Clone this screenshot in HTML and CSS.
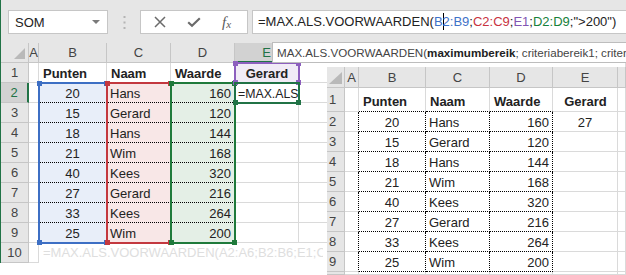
FILE: index.html
```html
<!DOCTYPE html>
<html lang="nl">
<head>
  <meta charset="UTF-8">
  <title>MAX.ALS.VOORWAARDEN</title>
  <link rel="stylesheet" href="styles.css">
</head>
<body>
<div class="page">

  <div class="excel">
    <div class="formula-bar">
      <div class="name-box">SOM<span class="caret"></span></div>
      <div class="grip">
        <svg width="3" height="13" viewBox="0 0 3 13"><rect x="0.5" y="0" width="2" height="2" fill="#b4b4b4"/><rect x="0.5" y="5.5" width="2" height="2" fill="#b4b4b4"/><rect x="0.5" y="11" width="2" height="2" fill="#b4b4b4"/></svg>
      </div>
      <div class="fx-box">
        <svg width="12" height="12" viewBox="0 0 12 12"><path d="M1 1L11 11M11 1L1 11" stroke="#6b6b6b" stroke-width="1.5" fill="none"/></svg>
        <svg width="14" height="12" viewBox="0 0 14 12"><path d="M1.2 6.2L5 9.8L12.8 2.2" stroke="#6b6b6b" stroke-width="2.2" fill="none"/></svg>
        <span class="fx">f<span>x</span></span>
      </div>
      <div class="formula">=MAX.ALS.VOORWAARDEN(<span class="f-blue">B<span class="cursor"></span>2:B9</span>;<span class="f-red">C2:C9</span>;<span class="f-purple">E1</span>;<span class="f-green">D2:D9</span>;"&gt;200")</div>
    </div>

    <div class="sheet-wrap">
      <div class="sheet grid-left">
        <div class="ch corner"></div><div class="ch">A</div><div class="ch">B</div><div class="ch">C</div><div class="ch">D</div><div class="ch sel">E</div><div class="ch"></div>

        <div class="rh">1</div><div class="c"></div><div class="c b">Punten</div><div class="c b">Naam</div><div class="c b">Waarde</div><div class="c b mid fill-purple">Gerard</div><div class="c"></div>
        <div class="rh sel">2</div><div class="c"></div><div class="c mid fill-blue ant">20</div><div class="c fill-red ant">Hans</div><div class="c num fill-green ant">160</div><div class="c edit">=MAX.ALS<span class="cursor"></span></div><div class="c"></div>
        <div class="rh">3</div><div class="c"></div><div class="c mid fill-blue ant">15</div><div class="c fill-red ant">Gerard</div><div class="c num fill-green ant">120</div><div class="c"></div><div class="c"></div>
        <div class="rh">4</div><div class="c"></div><div class="c mid fill-blue ant">18</div><div class="c fill-red ant">Hans</div><div class="c num fill-green ant">144</div><div class="c"></div><div class="c"></div>
        <div class="rh">5</div><div class="c"></div><div class="c mid fill-blue ant">21</div><div class="c fill-red ant">Wim</div><div class="c num fill-green ant">168</div><div class="c"></div><div class="c"></div>
        <div class="rh">6</div><div class="c"></div><div class="c mid fill-blue ant">40</div><div class="c fill-red ant">Kees</div><div class="c num fill-green ant">320</div><div class="c"></div><div class="c"></div>
        <div class="rh">7</div><div class="c"></div><div class="c mid fill-blue ant">27</div><div class="c fill-red ant">Gerard</div><div class="c num fill-green ant">216</div><div class="c"></div><div class="c"></div>
        <div class="rh">8</div><div class="c"></div><div class="c mid fill-blue ant">33</div><div class="c fill-red ant">Kees</div><div class="c num fill-green ant">264</div><div class="c"></div><div class="c"></div>
        <div class="rh">9</div><div class="c"></div><div class="c mid fill-blue">25</div><div class="c fill-red">Wim</div><div class="c num fill-green">200</div><div class="c"></div><div class="c"></div>
        <div class="rh">10</div><div class="c"></div><div class="ghost"><span>=MAX.ALS.VOORWAARDEN(A2:A6;B2:B6;E1;C</span></div>
      </div>

      <!-- kaders van de verwijzingen -->
      <div class="marks grid-left">
        <div class="range r-blue"><i class="h tl"></i><i class="h tr"></i><i class="h bl"></i><i class="h br"></i></div>
        <div class="range r-red"><i class="h tl"></i><i class="h tr"></i><i class="h bl"></i><i class="h br"></i></div>
        <div class="range r-green"><i class="h tl"></i><i class="h tr"></i><i class="h bl"></i><i class="h br"></i></div>
        <div class="range r-purple"><i class="h tl"></i><i class="h tr"></i><i class="h bl"></i><i class="h br"></i></div>
        <div class="range r-active"><i class="h bl"></i><i class="h br"></i></div>
      </div>
    </div>
  </div>

  <div class="tooltip">MAX.ALS.VOORWAARDEN(<b>maximumbereik</b>; criteriabereik1; criter</div>

  <div class="paste">
    <div class="ch corner"></div><div class="ch">A</div><div class="ch">B</div><div class="ch">C</div><div class="ch">D</div><div class="ch">E</div><div class="ch"></div>

    <div class="rh">1</div><div class="c"></div><div class="c b ant-b">Punten</div><div class="c b ant-b">Naam</div><div class="c b ant-b">Waarde</div><div class="c b mid">Gerard</div><div class="c"></div>
    <div class="rh">2</div><div class="c ant-a"></div><div class="c mid ant">20</div><div class="c ant">Hans</div><div class="c num ant">160</div><div class="c mid">27</div><div class="c"></div>
    <div class="rh">3</div><div class="c ant-a"></div><div class="c mid ant">15</div><div class="c ant">Gerard</div><div class="c num ant">120</div><div class="c"></div><div class="c"></div>
    <div class="rh">4</div><div class="c ant-a"></div><div class="c mid ant">18</div><div class="c ant">Hans</div><div class="c num ant">144</div><div class="c"></div><div class="c"></div>
    <div class="rh">5</div><div class="c ant-a"></div><div class="c mid ant">21</div><div class="c ant">Wim</div><div class="c num ant">168</div><div class="c"></div><div class="c"></div>
    <div class="rh">6</div><div class="c ant-a"></div><div class="c mid ant">40</div><div class="c ant">Kees</div><div class="c num ant">320</div><div class="c"></div><div class="c"></div>
    <div class="rh">7</div><div class="c ant-a"></div><div class="c mid ant">27</div><div class="c ant">Gerard</div><div class="c num ant">216</div><div class="c"></div><div class="c"></div>
    <div class="rh">8</div><div class="c ant-a"></div><div class="c mid ant">33</div><div class="c ant">Kees</div><div class="c num ant">264</div><div class="c"></div><div class="c"></div>
    <div class="rh">9</div><div class="c ant-a"></div><div class="c mid ant">25</div><div class="c ant">Wim</div><div class="c num ant">200</div><div class="c"></div><div class="c"></div>
    <div class="rh"></div><div class="c"></div><div class="c"></div><div class="c"></div><div class="c"></div><div class="c"></div><div class="c"></div>
  </div>

</div>
</body>
</html>
```

FILE: styles.css
```css
* {
  box-sizing: border-box;
}

body {
  margin: 0;
  font-family: 'Liberation Sans', Arial, sans-serif;
  font-size: 13px;
  color: #222;
  background: #fff;
}

.page {
  position: relative;
  width: 626px;
  height: 275px;
  overflow: hidden;
}

.excel {
  border-left: 1px solid #217346;
  height: 263px;
}

/* formulebalk */
.formula-bar {
  height: 43px;
  background: #e6e6e6;
  display: flex;
  align-items: flex-start;
  padding: 10px 0 0 7px;
}

.name-box {
  width: 100px;
  height: 24px;
  background: #fff;
  border: 1px solid #c6c6c6;
  display: flex;
  align-items: center;
  padding-left: 6px;
  color: #222;
}

.caret {
  margin-left: auto;
  margin-right: 7px;
  border-left: 4px solid transparent;
  border-right: 4px solid transparent;
  border-top: 4px solid #7a7a7a;
}

.grip {
  width: 32px;
  height: 24px;
  display: flex;
  align-items: center;
  justify-content: center;
}

.fx-box {
  width: 108px;
  height: 24px;
  background: #fff;
  border: 1px solid #c6c6c6;
  display: flex;
  align-items: center;
  gap: 21px;
  padding-left: 13px;
}

.fx {
  font-family: 'Liberation Serif', serif;
  font-style: italic;
  font-size: 15px;
  color: #5a5a5a;
  line-height: 1;
}

.fx span {
  font-size: 11px;
  position: relative;
  top: 1px;
}

.formula {
  flex: 1;
  margin-left: 4px;
  margin-right: -30px;
  height: 24px;
  background: #fff;
  border: 1px solid #c6c6c6;
  border-right: none;
  padding-left: 5px;
  line-height: 22px;
  white-space: nowrap;
  color: #222;
}

.f-blue { color: #3f72c8; }
.f-red { color: #c8323e; }
.f-purple { color: #8154b3; }
.f-green { color: #16813a; }

.cursor {
  display: inline-block;
  width: 1px;
  height: 17px;
  background: #000;
  vertical-align: -4px;
  margin: 0 -1px 0 0;
}

/* werkblad */
.sheet-wrap {
  display: grid;
}

.sheet-wrap > * {
  grid-area: 1 / 1;
}

.grid-left {
  display: grid;
  grid-template-columns: 28px 10px 68px 64px 64px 64px 1fr;
  grid-template-rows: repeat(11, 20px);
}

.ch,
.rh {
  background: #e6e6e6;
  border-right: 1px solid #c6c6c6;
  border-bottom: 1px solid #c6c6c6;
  color: #444;
  display: flex;
  align-items: center;
  justify-content: center;
}

.ch.sel {
  background: #d2d2d2;
  border-bottom: 2px solid #217346;
  color: #217346;
}

.rh.sel {
  background: #d2d2d2;
  border-right: 2px solid #217346;
  color: #217346;
}

.corner {
  position: relative;
}

.corner::after {
  content: "";
  position: absolute;
  right: 3px;
  bottom: 3px;
  width: 11px;
  height: 11px;
  background: #b9b9b9;
  clip-path: polygon(100% 0, 100% 100%, 0 100%);
}

.c {
  border-right: 1px solid #dadada;
  border-bottom: 1px solid #dadada;
  display: flex;
  align-items: flex-end;
  line-height: 16px;
  padding: 0 3px;
  white-space: nowrap;
}

.c.b { font-weight: bold; padding-left: 4px; }
.c.mid { justify-content: center; }
.c.num { justify-content: flex-end; }

.fill-blue { background: #e8eef9; }
.fill-red { background: #f8e7e7; }
.fill-green { background: #e4efe6; }
.fill-purple { background: #f1ebf6; }

.sheet .ant {
  border-bottom: 1px dotted #000;
}

.c.edit {
  overflow: hidden;
  font-size: 12.3px;
}

.ghost {
  grid-column: span 5;
  padding: 2px 4px 0;
  color: #dedede;
  white-space: nowrap;
  line-height: 16px;
}

.ghost span {
  display: block;
  width: 280px;
  overflow: hidden;
}

/* verwijzingskaders */
.marks {
  pointer-events: none;
}

.range {
  position: relative;
  margin: -1px;
  border: 2px solid;
}

.r-blue { grid-column: 3; grid-row: 3 / 11; color: #3d6fc4; }
.r-red { grid-column: 4; grid-row: 3 / 11; color: #c3383f; }
.r-green { grid-column: 5; grid-row: 3 / 11; color: #1f7a3b; }
.r-purple { grid-column: 6; grid-row: 2; color: #8d5fbe; }
.r-active { grid-column: 6; grid-row: 3; color: #217346; }

.h {
  position: absolute;
  width: 5px;
  height: 5px;
  background: currentColor;
}

.h.tl { left: -3px; top: -3px; }
.h.tr { right: -3px; top: -3px; }
.h.bl { left: -3px; bottom: -3px; }
.h.br { right: -3px; bottom: -3px; }

/* tooltip */
.tooltip {
  position: absolute;
  left: 272px;
  top: 42px;
  right: -10px;
  height: 21px;
  background: #fff;
  border: 1px solid #bdbdbd;
  padding-left: 4px;
  font-size: 11.6px;
  line-height: 19px;
  color: #444;
  white-space: nowrap;
  overflow: hidden;
  z-index: 3;
}

.tooltip b {
  color: #222;
}

/* geplakt resultaat */
.paste {
  position: absolute;
  left: 327px;
  top: 67px;
  right: 0;
  bottom: 0;
  background: #fff;
  display: grid;
  grid-template-columns: 18px 14px 67px 64px 63px 65px 1fr;
  grid-template-rows: 21px 24px repeat(8, 20px) 1fr;
  z-index: 4;
}

.paste .rh {
  justify-content: flex-start;
  padding-left: 2px;
}

.paste .corner::after {
  right: 2px;
  bottom: 3px;
  width: 13px;
  height: 12px;
}

.paste .c.b {
  padding-bottom: 1px;
}

.paste .ant {
  border-right: 1px dotted #000;
  border-bottom: 1px dotted #000;
}

.paste .ant-a {
  border-right: 1px dotted #000;
}

.paste .ant-b {
  border-bottom: 1px dotted #000;
}
```
